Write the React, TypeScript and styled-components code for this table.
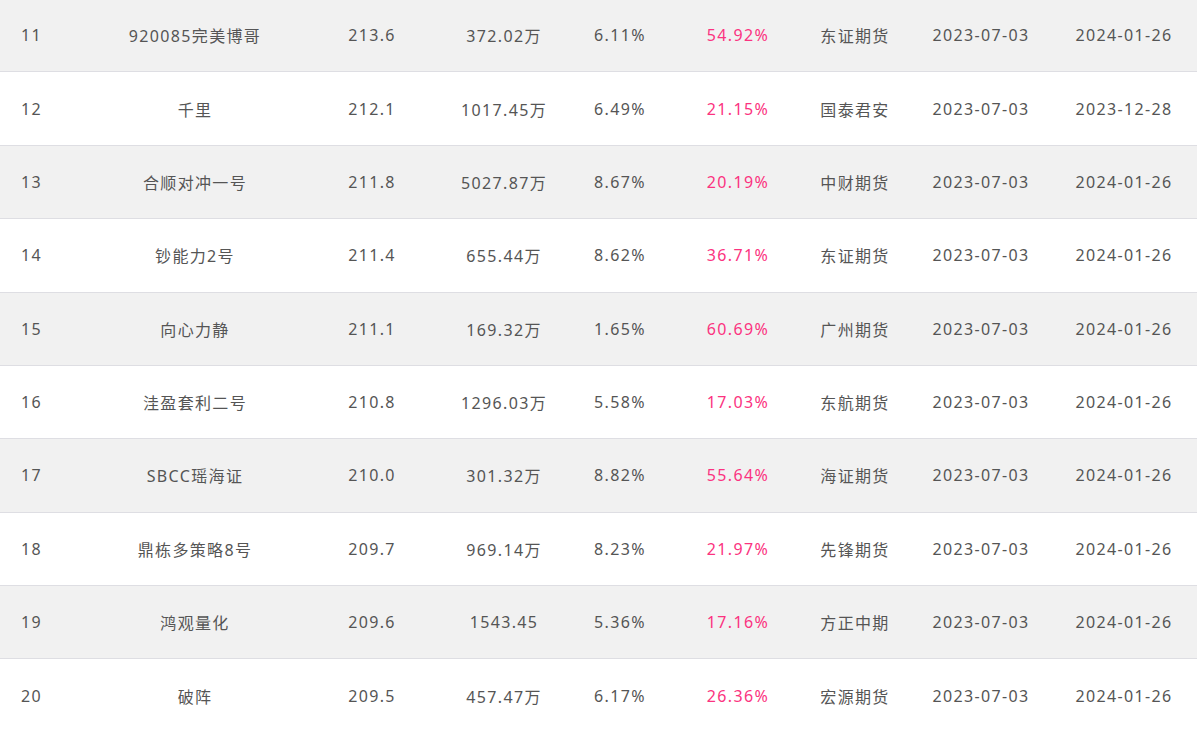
import styled, { createGlobalStyle } from "styled-components";

const GlobalStyle = createGlobalStyle`
  html, body {
    margin: 0;
    padding: 0;
    background: #ffffff;
    overflow: hidden;
  }
`;

type Row = {
  rank: number;
  name: string;
  score: string;
  amount: string;
  drawdown: string;
  profit: string;
  broker: string;
  start: string;
  end: string;
};

const rows: Row[] = [
  { rank: 11, name: "920085完美博哥", score: "213.6", amount: "372.02万", drawdown: "6.11%", profit: "54.92%", broker: "东证期货", start: "2023-07-03", end: "2024-01-26" },
  { rank: 12, name: "千里", score: "212.1", amount: "1017.45万", drawdown: "6.49%", profit: "21.15%", broker: "国泰君安", start: "2023-07-03", end: "2023-12-28" },
  { rank: 13, name: "合顺对冲一号", score: "211.8", amount: "5027.87万", drawdown: "8.67%", profit: "20.19%", broker: "中财期货", start: "2023-07-03", end: "2024-01-26" },
  { rank: 14, name: "钞能力2号", score: "211.4", amount: "655.44万", drawdown: "8.62%", profit: "36.71%", broker: "东证期货", start: "2023-07-03", end: "2024-01-26" },
  { rank: 15, name: "向心力静", score: "211.1", amount: "169.32万", drawdown: "1.65%", profit: "60.69%", broker: "广州期货", start: "2023-07-03", end: "2024-01-26" },
  { rank: 16, name: "洼盈套利二号", score: "210.8", amount: "1296.03万", drawdown: "5.58%", profit: "17.03%", broker: "东航期货", start: "2023-07-03", end: "2024-01-26" },
  { rank: 17, name: "SBCC瑶海证", score: "210.0", amount: "301.32万", drawdown: "8.82%", profit: "55.64%", broker: "海证期货", start: "2023-07-03", end: "2024-01-26" },
  { rank: 18, name: "鼎栋多策略8号", score: "209.7", amount: "969.14万", drawdown: "8.23%", profit: "21.97%", broker: "先锋期货", start: "2023-07-03", end: "2024-01-26" },
  { rank: 19, name: "鸿观量化", score: "209.6", amount: "1543.45", drawdown: "5.36%", profit: "17.16%", broker: "方正中期", start: "2023-07-03", end: "2024-01-26" },
  { rank: 20, name: "破阵", score: "209.5", amount: "457.47万", drawdown: "6.17%", profit: "26.36%", broker: "宏源期货", start: "2023-07-03", end: "2024-01-26" },
];

const Table = styled.div`
  margin-top: -1px;
  font-family: "Noto Sans", "Noto Sans CJK SC", sans-serif;
  font-size: 16px;
  letter-spacing: 1.35px;
  color: #555555;
`;

const TableRow = styled.div<{ $shaded: boolean }>`
  box-sizing: border-box;
  height: 73.375px;
  display: grid;
  grid-template-columns: 80px 230px 124px 140px 92px 144px 90px 162px 124px 11px;
  align-items: center;
  background: ${(p) => (p.$shaded ? "#f1f1f1" : "#ffffff")};
  border-bottom: 1px solid #dedee3;

  &:last-child {
    border-bottom: none;
  }
`;

const Cell = styled.div<{ $align?: "left" | "center"; $accent?: boolean }>`
  text-align: ${(p) => p.$align ?? "center"};
  padding-left: ${(p) => (p.$align === "left" ? "21px" : "0")};
  color: ${(p) => (p.$accent ? "#fb3380" : "inherit")};
  white-space: nowrap;
`;

export default function App() {
  return (
    <>
      <GlobalStyle />
      <Table>
        {rows.map((r, i) => (
          <TableRow key={r.rank} $shaded={i % 2 === 0}>
            <Cell $align="left">{r.rank}</Cell>
            <Cell>{r.name}</Cell>
            <Cell>{r.score}</Cell>
            <Cell>{r.amount}</Cell>
            <Cell>{r.drawdown}</Cell>
            <Cell $accent>{r.profit}</Cell>
            <Cell>{r.broker}</Cell>
            <Cell>{r.start}</Cell>
            <Cell>{r.end}</Cell>
            <span />
          </TableRow>
        ))}
      </Table>
    </>
  );
}
